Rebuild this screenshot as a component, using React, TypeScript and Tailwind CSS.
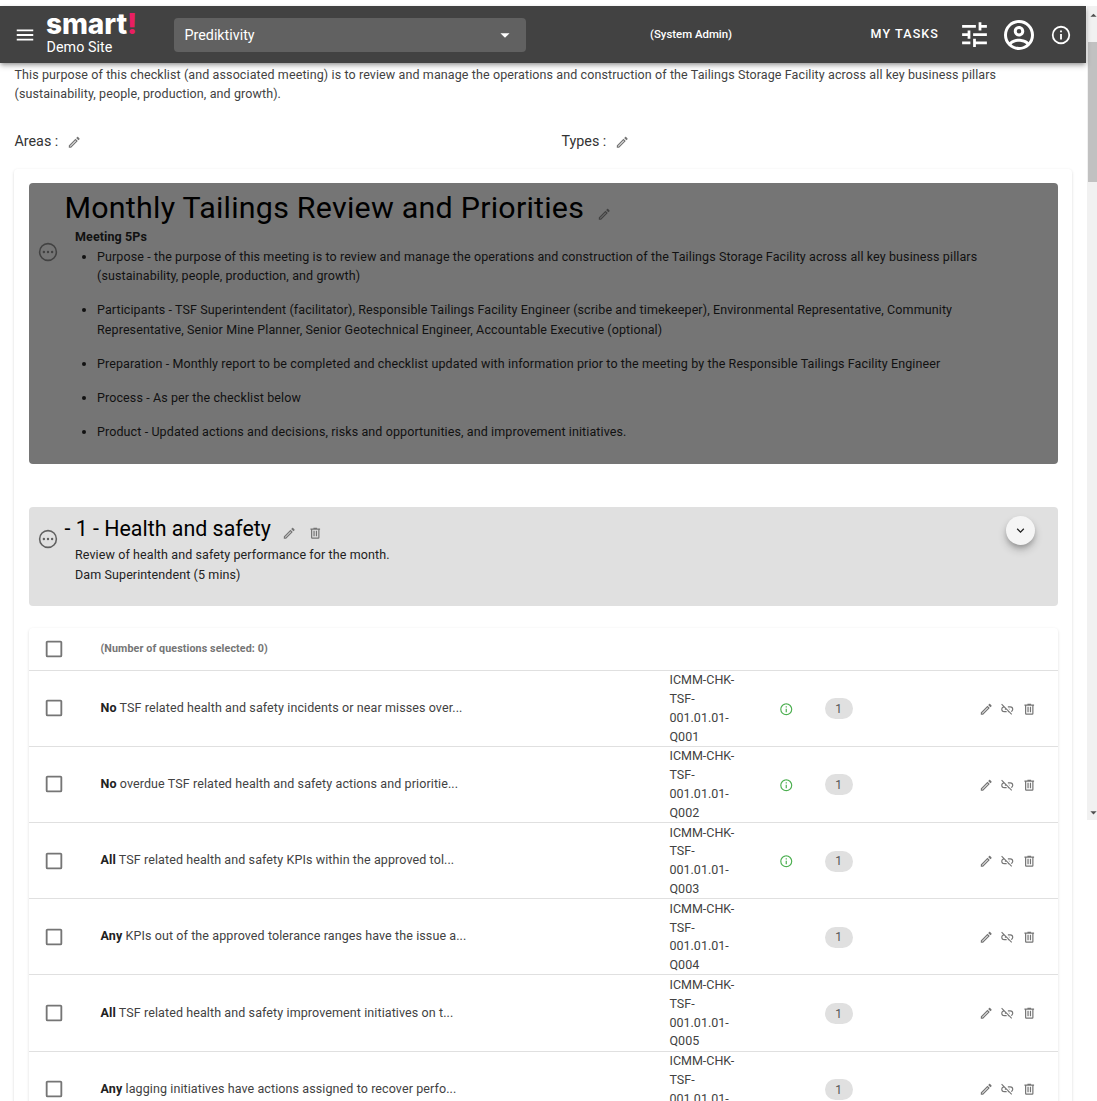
import React from "react";

const ICONS = {
  menu: "M3,6H21V8H3V6M3,11H21V13H3V11M3,16H21V18H3V16Z",
  menuDown: "M7,10L12,15L17,10H7Z",
  pencil:
    "M14.06,9L15,9.94L5.92,19H5V18.08L14.06,9M17.66,3C17.41,3 17.15,3.1 16.96,3.29L15.13,5.12L18.88,8.87L20.71,7.04C21.1,6.65 21.1,6 20.71,5.63L18.37,3.29C18.17,3.09 17.92,3 17.66,3M14.06,6.19L3,17.25V21H6.75L17.81,9.94L14.06,6.19Z",
  trash:
    "M9,3V4H4V6H5V19A2,2 0 0,0 7,21H17A2,2 0 0,0 19,19V6H20V4H15V3H9M7,6H17V19H7V6M9,8V17H11V8H9M13,8V17H15V8H13Z",
  unlink:
    "M17,7H13V8.9H17C18.71,8.9 20.1,10.29 20.1,12C20.1,13.43 19.12,14.63 17.79,15L19.25,16.44C20.88,15.61 22,13.95 22,12A5,5 0 0,0 17,7M16,11H13.81L15.81,13H16V11M2,4.27L5.11,7.38C3.29,8.12 2,9.91 2,12A5,5 0 0,0 7,17H11V15.1H7C5.29,15.1 3.9,13.71 3.9,12C3.9,10.41 5.11,9.1 6.66,8.93L8.73,11H8V13H10.73L13,15.27V17H14.73L18.74,21L20,19.74L3.27,3L2,4.27Z",
  tune: "M3,17V19H9V17H3M3,5V7H13V5H3M13,21V19H21V17H13V15H11V21H13M7,9V11H3V13H7V15H9V9H7M21,13V11H11V13H21M15,9H17V7H21V5H17V3H15V9Z",
  account:
    "M12,2A10,10 0 0,0 2,12A10,10 0 0,0 12,22A10,10 0 0,0 22,12A10,10 0 0,0 12,2M7.07,18.28C7.5,17.38 10.12,16.5 12,16.5C13.88,16.5 16.5,17.38 16.93,18.28C15.57,19.36 13.86,20 12,20C10.14,20 8.43,19.36 7.07,18.28M18.36,16.83C16.93,15.09 13.46,14.5 12,14.5C10.54,14.5 7.07,15.09 5.64,16.83C4.62,15.5 4,13.82 4,12C4,7.59 7.59,4 12,4C16.41,4 20,7.59 20,12C20,13.82 19.38,15.5 18.36,16.83M12,6C10.06,6 8.5,7.56 8.5,9.5C8.5,11.44 10.06,13 12,13C13.94,13 15.5,11.44 15.5,9.5C15.5,7.56 13.94,6 12,6M12,11A1.5,1.5 0 0,1 10.5,9.5A1.5,1.5 0 0,1 12,8A1.5,1.5 0 0,1 13.5,9.5A1.5,1.5 0 0,1 12,11Z",
  info: "M11,9H13V7H11M12,20C7.59,20 4,16.41 4,12C4,7.59 7.59,4 12,4C16.41,4 20,7.59 20,12C20,16.41 16.41,20 12,20M12,2A10,10 0 0,0 2,12A10,10 0 0,0 12,22A10,10 0 0,0 22,12A10,10 0 0,0 12,2M11,17H13V11H11V17Z",
  chevron: "M7.41,8.58L12,13.17L16.59,8.58L18,10L12,16L6,10L7.41,8.58Z",
  dots: "M12,2A10,10 0 0,0 2,12A10,10 0 0,0 12,22A10,10 0 0,0 22,12A10,10 0 0,0 12,2M12,3.7A8.3,8.3 0 0,1 20.3,12A8.3,8.3 0 0,1 12,20.3A8.3,8.3 0 0,1 3.7,12A8.3,8.3 0 0,1 12,3.7M7.5,10.7A1.3,1.3 0 0,0 7.5,13.3A1.3,1.3 0 0,0 7.5,10.7M12,10.7A1.3,1.3 0 0,0 12,13.3A1.3,1.3 0 0,0 12,10.7M16.5,10.7A1.3,1.3 0 0,0 16.5,13.3A1.3,1.3 0 0,0 16.5,10.7Z",
  checkbox: "M19,3H5C3.89,3 3,3.89 3,5V19A2,2 0 0,0 5,21H19A2,2 0 0,0 21,19V5C21,3.89 20.1,3 19,3M19,5V19H5V5H19Z",
};

function Icon({ name, className }: { name: keyof typeof ICONS; className: string }) {
  return (
    <svg viewBox="0 0 24 24" fill="currentColor" fillRule={name === "dots" ? "evenodd" : "nonzero"} className={`shrink-0 ${className}`}>
      <path d={ICONS[name]} />
    </svg>
  );
}

const questions = [
  { lead: "No", text: "TSF related health and safety incidents or near misses over...", info: true },
  { lead: "No", text: "overdue TSF related health and safety actions and prioritie...", info: true },
  { lead: "All", text: "TSF related health and safety KPIs within the approved tol...", info: true },
  { lead: "Any", text: "KPIs out of the approved tolerance ranges have the issue a...", info: false },
  { lead: "All", text: "TSF related health and safety improvement initiatives on t...", info: false },
  { lead: "Any", text: "lagging initiatives have actions assigned to recover perfo...", info: false },
];

const agenda = [
  ["Purpose - the purpose of this meeting is to review and manage the operations and construction of the Tailings Storage Facility across all key business pillars", "(sustainability, people, production, and growth)"],
  ["Participants - TSF Superintendent (facilitator), Responsible Tailings Facility Engineer (scribe and timekeeper), Environmental Representative, Community", "Representative, Senior Mine Planner, Senior Geotechnical Engineer, Accountable Executive (optional)"],
  ["Preparation - Monthly report to be completed and checklist updated with information prior to the meeting by the Responsible Tailings Facility Engineer"],
  ["Process - As per the checklist below"],
  ["Product - Updated actions and decisions, risks and opportunities, and improvement initiatives."],
];

function Header() {
  return (
    <header className="relative z-10 flex h-[57px] w-[1086px] shrink-0 items-center bg-[#424242] text-white shadow-[0_2px_4px_-1px_rgba(0,0,0,.3),0_3px_6px_rgba(0,0,0,.2)]">
      <Icon name="menu" className="ml-[14px] size-[22px]" />
      <div className="ml-[10px] flex h-full w-[128px] flex-col">
        <div className="mt-[2px] h-[31px] font-[Inter] text-[28px] leading-[33px] font-extrabold tracking-[-0.1px]">
          smart<span className="text-[#e91e63]">!</span>
        </div>
        <div className="ml-[0.5px] text-[14.3px] leading-[17px] tracking-[0.05px]">Demo Site</div>
      </div>
      <div className="flex h-[34px] w-[352px] items-center justify-between rounded-[4px] bg-[#616161] pr-[10px] pl-[10.5px]">
        <span className="pt-[2px] text-[14.3px]">Prediktivity</span>
        <Icon name="menuDown" className="size-[22px]" />
      </div>
      <span className="ml-[124px] w-[220px] text-[11.4px] font-medium">(System Admin)</span>
      <span className="w-[82px] pl-[0.5px] text-[12.5px] font-medium tracking-[1.12px] whitespace-nowrap">MY TASKS</span>
      <Icon name="tune" className="ml-[6px] size-[33px]" />
      <Icon name="account" className="ml-[10px] size-[36px]" />
      <Icon name="info" className="ml-[13px] size-[22px]" />
    </header>
  );
}

function QuestionRow({ q, index }: { q: (typeof questions)[number]; index: number }) {
  return (
    <div className="flex h-[76.2px] items-center border-t border-[#e0e0e0]">
      <Icon name="checkbox" className="ml-[14px] size-[22px] text-[#757575]" />
      <div className="ml-[36px] w-[569px] text-[12.5px] tracking-[0.1px] text-[#424242]">
        <b className="text-[#222]">{q.lead}</b> {q.text}
      </div>
      <div className="w-[109px] pt-px text-[12.5px] leading-[18.8px] text-[#424242]">
        ICMM-CHK-<br />TSF-<br />001.01.01-<br />Q00{index + 1}
      </div>
      <div className="w-[46px] pt-px">{q.info && <Icon name="info" className="size-[14.5px] text-[#4caf50]" />}</div>
      <div className="mt-px flex h-[21px] w-[28px] items-center justify-center rounded-full bg-[#e0e0e0] text-[12px] text-[#555]">1</div>
      <div className="mt-px ml-[126px] flex gap-[7px] text-[#757575]">
        <Icon name="pencil" className="size-[14.5px]" />
        <Icon name="unlink" className="size-[14.5px]" />
        <Icon name="trash" className="size-[14.5px]" />
      </div>
    </div>
  );
}

export default function App() {
  return (
    <div className="flex h-[1101px] overflow-hidden bg-white font-[Roboto,sans-serif] text-[#424242]">
      <div className="flex w-[1087px] shrink-0 flex-col pt-[6px]">
        <Header />
        <p className="mt-[1.5px] ml-[14.5px] text-[12.5px] leading-[19.7px] tracking-[0.105px] whitespace-nowrap">
          This purpose of this checklist (and associated meeting) is to review and manage the operations and construction of the Tailings Storage Facility across all key business pillars
          <br />
          (sustainability, people, production, and growth).
        </p>
        <div className="mt-[27.5px] ml-[14.5px] flex h-[20px] items-center text-[14.3px] text-[#333]">
          <div className="flex w-[547px] items-center gap-[9px]">Areas : <Icon name="pencil" className="mt-[2px] size-[14.5px] text-[#757575]" /></div>
          <div className="flex items-center gap-[9px]">Types : <Icon name="pencil" className="mt-[2px] size-[14.5px] text-[#757575]" /></div>
        </div>
        <main className="mt-[18px] ml-[14px] h-[1000px] w-[1058px] shrink-0 rounded-[4px] px-[14.5px] pt-[14px] shadow-[0_1px_3px_rgba(0,0,0,.16)]">
          <section className="flex h-[281px] w-[1029px] items-start rounded-[4px] bg-[#757575] text-[#111]">
            <Icon name="dots" className="mt-[58px] ml-[8.5px] size-[22px] text-[#424242]" />
            <div className="ml-[5.5px]">
              <h1 className="flex h-[43.5px] items-center pt-[5.5px] text-[30.4px] tracking-[0.24px] text-black">
                Monthly Tailings Review and Priorities
                <Icon name="pencil" className="mt-[13px] ml-[13px] size-[14.5px] text-[#424242]" />
              </h1>
              <div className="ml-[10.5px] text-[12.5px] leading-[19.6px] tracking-[0.105px] whitespace-nowrap">
                <b>Meeting 5Ps</b>
                <ul className="ml-[22px] flex list-disc flex-col gap-[14.4px]">
                  {agenda.map((lines) => (
                    <li key={lines[0]}>{lines.map((l) => <div key={l}>{l}</div>)}</li>
                  ))}
                </ul>
              </div>
            </div>
          </section>
          <section className="mt-[43px] flex h-[99px] w-[1029px] items-start rounded-[4px] bg-[#e0e0e0] text-[#222]">
            <Icon name="dots" className="mt-[21px] ml-[8.5px] size-[22px] text-[#616161]" />
            <div className="ml-[5.5px] flex-1">
              <h2 className="flex h-[38px] items-center pt-[5px] text-[21.4px] text-black">
                - 1 - Health and safety
                <Icon name="pencil" className="mt-[9px] ml-[11.5px] size-[14.5px] text-[#757575]" />
                <Icon name="trash" className="mt-[9px] ml-[11px] size-[14.5px] text-[#757575]" />
              </h2>
              <p className="ml-[10.5px] text-[12.5px] leading-[19.6px] tracking-[0.105px]">Review of health and safety performance for the month.<br />Dam Superintendent (5 mins)</p>
            </div>
            <button className="mt-[9px] mr-[22.5px] flex size-[29px] items-center justify-center rounded-full bg-[#f5f5f5] shadow-[0_3px_5px_-1px_rgba(0,0,0,.2),0_5px_9px_rgba(0,0,0,.2)]">
              <Icon name="chevron" className="size-[15px]" />
            </button>
          </section>
          <section className="mt-[21.5px] w-[1029px] rounded-[4px] shadow-[0_1px_3px_rgba(0,0,0,.14)]">
            <div className="flex h-[41.8px] items-center">
              <Icon name="checkbox" className="ml-[14px] size-[22px] text-[#757575]" />
              <span className="ml-[36px] pt-px text-[10.7px] font-bold tracking-[0.11px] text-[#757575]">(Number of questions selected: 0)</span>
            </div>
            {questions.map((q, i) => <QuestionRow key={q.text} q={q} index={i} />)}
          </section>
        </main>
      </div>
      <aside className="mt-[6px] flex h-[814px] w-[10px] shrink-0 flex-col items-center overflow-hidden bg-[#f1f1f1]">
        <Icon name="menuDown" className="my-[2px] ml-[2px] size-[15px] rotate-180 text-[#505050]" />
        <div className="mt-[17px] ml-[2px] h-[140px] w-full bg-[#c1c1c1]" />
        <Icon name="menuDown" className="mt-auto ml-[2px] size-[15px] text-[#505050]" />
      </aside>
    </div>
  );
}
